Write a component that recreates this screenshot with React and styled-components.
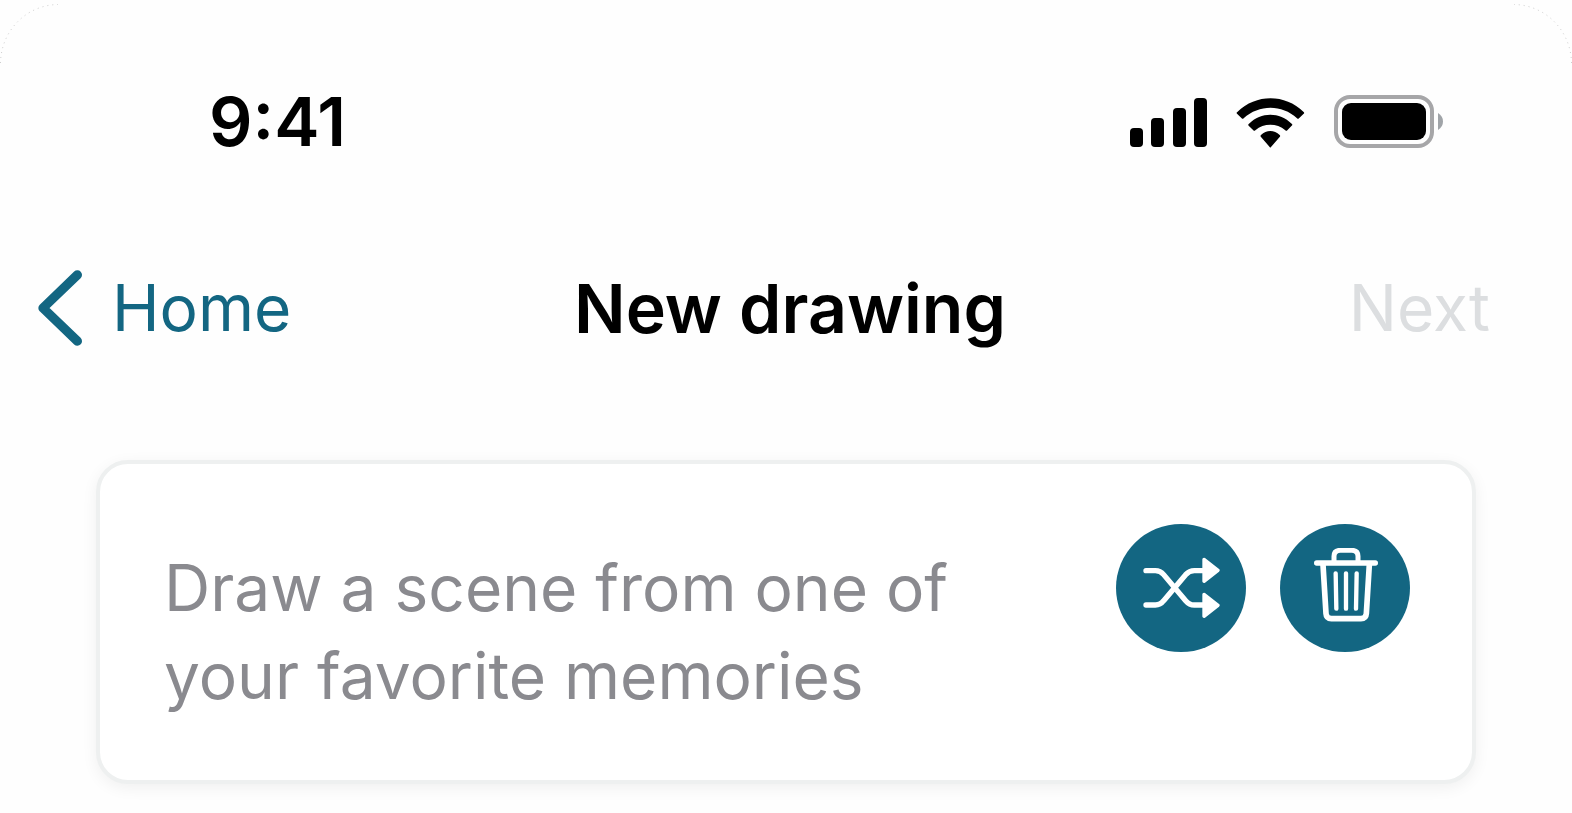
import React from 'react';
import styled, { createGlobalStyle } from 'styled-components';

const GlobalStyle = createGlobalStyle`
  * {
    box-sizing: border-box;
  }
  body {
    margin: 0;
    background: #fefefe;
    font-family: Inter, "Liberation Sans", sans-serif;
    font-size: 64px;
    line-height: 80px;
    color: #000;
  }
  svg {
    display: block;
    flex: none;
  }
`;

const Screen = styled.div`
  position: relative;
  padding: 81px 0 29px;
`;
const Corner = styled.svg`
  position: absolute;
  top: 4px;
  ${(props) => (props.$right ? 'right: 0; transform: scaleX(-1);' : 'left: 0;')}
`;
const StatusBar = styled.div`
  display: flex;
  align-items: center;
  justify-content: space-between;
  padding: 0 128px 0 209px;
`;
const Time = styled.time`
  font-size: 68px;
  font-weight: 600;
`;
const StatusIcons = styled.div`
  display: flex;
  align-items: flex-end;
  gap: 29px;
`;
const Nav = styled.nav`
  display: grid;
  grid-template-columns: 1fr auto 1fr;
  align-items: center;
  margin-top: 107px;
  padding: 0 30px 0 38px;
`;
const BackLink = styled.a`
  display: flex;
  align-items: center;
  gap: 30px;
  color: #136682;
  text-decoration: none;
`;
const Title = styled.h1`
  margin: 0;
  font-size: 68px;
  font-weight: 600;
`;
const NextButton = styled.button`
  justify-self: end;
  margin-right: 52px;
  padding: 0;
  border: none;
  background: none;
  font: inherit;
  color: #dcdee0;
`;
const Card = styled.section`
  display: flex;
  align-items: flex-start;
  gap: 34px;
  margin: 112px 96px 0;
  padding: 60px 62px 60px 64px;
  border: 4px solid #eef0f0;
  border-radius: 32px;
  background: #fff;
  box-shadow: 0 4px 16px rgba(0, 0, 0, 0.06);
`;
/* right padding keeps "your" on the second line */
const Prompt = styled.textarea`
  flex: 1;
  min-width: 0;
  height: 176px;
  margin: 20px 0 0;
  padding: 0 60px 0 0;
  border: none;
  outline: none;
  resize: none;
  overflow: hidden;
  background: none;
  font: inherit;
  line-height: 88px;
  color: #000;

  &::placeholder {
    color: #8a8a8f;
    opacity: 1;
  }
`;
const RoundButton = styled.button`
  display: flex;
  flex: none;
  align-items: center;
  justify-content: center;
  width: 130px;
  height: 128px;
  padding: 0;
  border: none;
  border-radius: 50%;
  background: #136682;
  cursor: pointer;
`;

const CornerArc = ({ right }) => (
  <Corner $right={right} width="62" height="62" viewBox="0 0 62 62" fill="none" aria-hidden="true">
    <path d="M.5 59C1 27 26 1 58 .5" stroke="#cfcfcf" strokeWidth="1" strokeDasharray="1 4" />
  </Corner>
);

const SignalIcon = () => (
  <svg width="77" height="50" viewBox="0 0 77 50" aria-hidden="true">
    <rect x="0" y="30" width="13" height="19" rx="4" />
    <rect x="21" y="20" width="13" height="29" rx="4" />
    <rect x="43" y="10" width="13" height="39" rx="4" />
    <rect x="64" y="0" width="13" height="49" rx="4" />
  </svg>
);

const WifiIcon = () => (
  <svg width="69" height="50" viewBox="380 54 207 150" aria-hidden="true">
    <path d="M384 96C440 41 527 41 583 96Q586 99 583 101L569 115Q566 118 563 115C518 73 449 73 403 115Q400 118 397 115L383 101Q380 98 384 96Z" />
    <path d="M419 131C455 95 511 95 547 131Q551 134 547 137L534 151Q531 154 528 151C502 129 464 129 438 151Q435 154 432 151L418 137Q415 134 419 131Z" />
    <path d="M455 165C471 149 495 149 511 165Q514 168 511 171L485 201Q483 204 481 201L455 171Q452 168 455 165Z" />
  </svg>
);

const BatteryIcon = () => (
  <svg width="110" height="54" viewBox="0 -1 110 54" aria-hidden="true">
    <rect x="2" y="2" width="96" height="49" rx="14" fill="none" stroke="#a6a6a8" strokeWidth="4" />
    <rect x="8" y="8" width="84" height="37" rx="9" />
    <path d="M104 18Q109 21 109 26.500T104 35Z" fill="#a0a4a8" />
  </svg>
);

const ChevronIcon = () => (
  <svg width="44" height="76" viewBox="54 60 133 228" fill="none" aria-hidden="true">
    <path
      d="M173 74L69 174L173 274"
      stroke="currentColor"
      strokeWidth="28"
      strokeLinecap="round"
      strokeLinejoin="round"
    />
  </svg>
);

const ShuffleIcon = () => (
  <svg width="77" height="62" viewBox="128 141 231 186" fill="none" stroke="#fff" strokeLinecap="round" strokeLinejoin="round" aria-hidden="true">
    <path d="M137 182H165Q180 182 190 194L256 272Q267 285 282 285H310" strokeWidth="16" />
    <path d="M137 285H165Q180 285 190 272L256 194Q267 182 282 182H310" strokeWidth="16" />
    <path d="M311 148L353 181L311 214ZM311 253L353 286L311 319Z" fill="#fff" strokeWidth="10" />
  </svg>
);

const TrashIcon = () => (
  <svg width="66" height="80" viewBox="636 115 198 240" fill="none" stroke="#fff" strokeLinecap="round" strokeLinejoin="round" aria-hidden="true">
    <path d="M650 160H826" strokeWidth="16" />
    <path d="M702 158V140Q702 122 721 122H755Q774 122 774 140V158" strokeWidth="15" />
    <path d="M669 165L678 312Q679 327 694 327H783Q798 327 799 312L808 165" strokeWidth="17" />
    <path d="M707 191L709 297M738 191V297M770 191L768 297" strokeWidth="13" />
  </svg>
);

const App = () => {
  return (
    <>
      <GlobalStyle />
      <Screen>
        <CornerArc />
        <CornerArc right />
        <StatusBar>
          <Time>9:41</Time>
          <StatusIcons>
            <SignalIcon />
            <WifiIcon />
            <BatteryIcon />
          </StatusIcons>
        </StatusBar>
        <Nav>
          <BackLink href="#home">
            <ChevronIcon />
            Home
          </BackLink>
          <Title>New drawing</Title>
          <NextButton type="button" disabled>Next</NextButton>
        </Nav>
        <Card>
          <Prompt
            rows={2}
            aria-label="Drawing prompt"
            placeholder="Draw a scene from one of your favorite memories"
          />
          <RoundButton type="button" aria-label="Shuffle prompt">
            <ShuffleIcon />
          </RoundButton>
          <RoundButton type="button" aria-label="Clear prompt">
            <TrashIcon />
          </RoundButton>
        </Card>
      </Screen>
    </>
  );
};

export default App;
